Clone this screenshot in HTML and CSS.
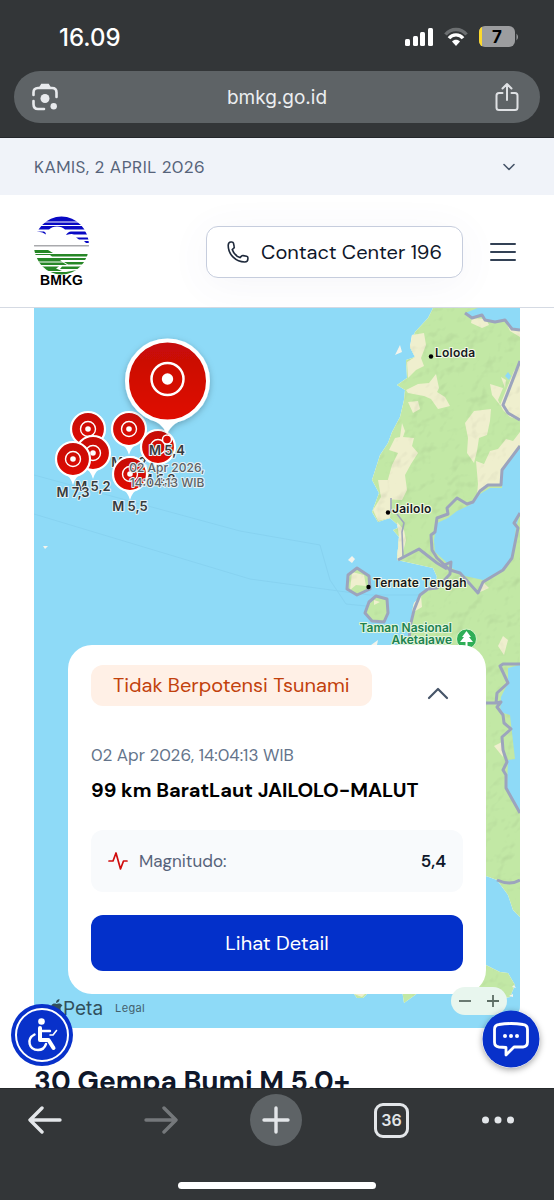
FILE: index.html
```html
<!DOCTYPE html>
<html lang="id">
<head>
	<meta charset="UTF-8">
	<meta name="viewport" content="width=device-width, initial-scale=1">
	<title>BMKG</title>
	<link rel="stylesheet" href="styles.css">
</head>
<body>
	<div class="browser-top">
		<div class="status">
			<span class="clock">16.09</span>
			<div class="status-icons">
				<svg width="28" height="20" viewBox="0 0 28 20" fill="#fff"><rect x="0" y="12" width="5" height="7" rx="1.5"/><rect x="8" y="9" width="5" height="10" rx="1.5"/><rect x="15" y="5" width="5" height="14" rx="1.5"/><rect x="23" y="1" width="5" height="18" rx="1.5"/></svg>
				<svg width="24" height="20" viewBox="0 0 24 20" fill="none" stroke-width="3.4"><path d="M1.5 7.5C7 .9 17 .9 22.5 7.5" stroke="#6c6f71"/><path d="M5 11.2C8.5 6.8 15.5 6.8 19 11.2" stroke="#fff"/><path d="M8 14.6C10 12 14 12 16 14.6L12 19z" fill="#fff"/></svg>
				<svg class="battery" width="40" height="22" viewBox="0 0 40 22"><defs><clipPath id="cell"><rect width="36" height="21" rx="6"/></clipPath></defs><g clip-path="url(#cell)"><rect width="36" height="21" fill="#9c9d9f"/><rect width="3" height="21" fill="#fcd92c"/></g><path d="M37.5 7.5q3 3.500 0 7z" fill="#9c9d9f"/><text x="18" y="17" text-anchor="middle">7</text></svg>
			</div>
		</div>
		<div class="address">
			<button class="plain" aria-label="Lens"><svg width="28" height="28" viewBox="0 0 28 28" fill="none" stroke="#e8eaed" stroke-width="2.6" stroke-linecap="round"><path d="M2.500 12V9.500q0-4.500 4.500-4.500h14q4.500 0 4.500 4.500V14M2.500 18v3q0 5 4.500 5h6"/><path d="M9.500 4.500l1.500-2.500h6l1.500 2.500z" fill="#e8eaed"/><circle cx="14" cy="15.500" r="4.500" fill="#e8eaed" stroke="none"/><circle cx="22.700" cy="23.200" r="3.200" fill="#e8eaed" stroke="none"/></svg></button>
			<span class="url">bmkg.go.id</span>
			<button class="plain" aria-label="Bagikan"><svg width="24" height="30" viewBox="0 0 24 30" fill="none" stroke="#dfe1e4" stroke-width="2" stroke-linecap="round" stroke-linejoin="round"><path d="M7.500 11H4q-2.500 0-2.500 2.500v12Q1.500 28 4 28h16q2.500 0 2.500-2.500v-12Q22.500 11 20 11h-3.500M12 18V2M7.500 6.500L12 2l4.500 4.500"/></svg></button>
		</div>
	</div>

	<div class="page">
		<div class="datebar">
			<span>KAMIS, 2 APRIL 2026</span>
			<svg width="14" height="8" viewBox="0 0 14 8" fill="none" stroke="#475569" stroke-width="1.6" stroke-linecap="round" stroke-linejoin="round"><path d="M2 1.500l5 5 5-5"/></svg>
		</div>
		<header class="header">
			<a href="#" class="logo" aria-label="BMKG">
				<svg width="56" height="72" viewBox="0 0 56 72">
					<defs><clipPath id="globe"><ellipse cx="27.500" cy="29.500" rx="27.500" ry="29"/></clipPath></defs>
					<g clip-path="url(#globe)">
						<path d="M0 0h56v5.500H0zM0 6.500h56v2.500H0zM0 10h56v3.500H31q-3-3-8-3t-8 3H0zM0 17q6-3 12 1.500 0-2-2-3H0zM32 19q2-3.500 5-3.500h19v3H40q-2-1-8 .5zM42 21.500h14v2H45zM50 25h6v2h-4z" fill="#0808c4"/>
						<path d="M0 29h56v1.500H0z" fill="#a9aaad"/>
						<path d="M0 34h14l5 3H0zM0 38h56v2.500H18l-2-1.500H0zM0 42h56v2H26l2 1.500H0zM0 46.500h29l4 2.500H0zM30 46h26v2.500H34zM0 50.500h25l-3 2 6 2.500H0zM28 50.500h28v2.500H26zM0 56h32l8-1.500h16v6H0z" fill="#278727"/>
					</g>
					<text x="27.500" y="69" text-anchor="middle">BMKG</text>
				</svg>
			</a>
			<div class="header-right">
				<a href="#" class="contact">
					<svg width="22" height="22" viewBox="0 0 22 22" fill="none" stroke="#1e293b" stroke-width="1.6" stroke-linejoin="round"><path d="M1.200 4.500C1.200 2.500 2.200 1 3.800 1h1c.9 0 1.500.5 1.700 1.300l.7 3.400c.2.700 0 1.200-.6 1.600L5.200 8.500c1.200 3.600 4 6.700 7.800 8.100l1.500-1.500c.5-.5 1.100-.6 1.700-.5l3.400.6c.8.200 1.300.8 1.300 1.600v.9c0 1.800-1.400 3.300-3.200 3.300C9 21 1.200 13.500 1.200 4.500z"/></svg>
					<span>Contact Center 196</span>
				</a>
				<button class="plain" aria-label="Menu"><svg width="26" height="20" viewBox="0 0 26 20" stroke="#334155" stroke-width="2" stroke-linecap="round"><path d="M1 2h24M1 10h24M1 18h24"/></svg></button>
			</div>
		</header>

		<main class="content">
			<section class="map">
				<svg class="map-canvas" viewBox="34 308 486 720" preserveAspectRatio="xMidYMin slice">
					<defs>
						<linearGradient id="red" x1="0" y1="0" x2="0" y2="1"><stop offset="0" stop-color="#c50d08"/><stop offset="1" stop-color="#e00a00"/></linearGradient>
						<filter id="relief" x="0" y="0" width="100%" height="100%" color-interpolation-filters="sRGB">
							<feTurbulence type="fractalNoise" baseFrequency=".05" numOctaves="3" seed="8" result="noise"/>
							<feDiffuseLighting in="noise" surfaceScale=".7" diffuseConstant="1.14" lighting-color="#fff" result="light"><feDistantLight azimuth="225" elevation="62"/></feDiffuseLighting>
							<feComposite in="light" in2="SourceGraphic" operator="in" result="shade"/>
							<feBlend in="shade" in2="SourceGraphic" mode="multiply"/>
						</filter>
						<filter id="shadow" x="-30%" y="-30%" width="160%" height="160%"><feDropShadow dx="0" dy="2" stdDeviation="3" flood-opacity=".25"/></filter>
						<g id="pin">
							<path d="M-8 15Q-2 18 0 26Q2 18 8 15z" fill="#fff"/>
							<circle r="17" fill="url(#red)" stroke="#fff" stroke-width="2.2"/>
							<circle r="7.500" fill="none" stroke="#fff" stroke-width="1.4"/>
							<circle r="2.800" fill="#fff"/>
						</g>
					</defs>
					<rect x="34" y="308" width="486" height="720" fill="#8edaf7"/>
					<!-- ferry routes -->
					<g fill="none" stroke="#87d2f0"><path d="M34 475L240 531 320 545 330 580 346 604 366 606M34 514L250 579 346 592 370 595H420M503 707H520"/></g>
					<!-- land -->
					<g filter="url(#relief)">
						<path fill="#c2e8a5" d="M433 308L428 318 415 332 410 347 415 357 406 360 407 378 397 385 405 390 404 400 400 417 392 432 388 443 380 455 372 480 379 493 372 512 378 522 390 518 400 527 393 530 399 537 397 560 433 568 437 577 433 588 420 595 413 607 410 627 409 700 420 860 486 876 497 880 508 895 513 910 520 917V308z"/>
						<path fill="#c2e8a5" d="M357 568L369 576 370 589 357 595 347 589 348 575zM376 596L387 599 388 613 384 622 372 621 365 613 369 602zM470 960L486 965 500 972 508 973 515 985 510 997 495 1000 470 998zM354 994H367L363 998H357zM402 990H422L404 1003z"/>
						<path fill="#efefce" d="M412 335L424 333 426 345 421 358 424 366 416 370 408 378 407 362 415 357 410 347zM406 390L418 384 429 383 436 374 439 388 437 392 445 397 450 406 438 409 431 399 424 396 408 393zM408 402L418 401 420 409 413 413zM402 423L405 431 403 437 414 438 412 446 418 453 411 464 405 475 407 490 402 500 384 499 380 493 387 483 392 465 398 453 389 450 395 438 400 437zM474 411L491 409 490 421 487 435 479 438 477 451 474 463 467 453 468 438 465 423zM490 384L503 388 498 400 503 410 510 417 520 420V364L514 371 500 405 492 395zM501 377L506 380 505 388zM472 318L486 319 489 325 482 328 471 323zM505 320L520 331V337L510 331zM520 432L513 441 506 439 498 449 490 451 484 464 476 461 478 484 477 495 488 485H501L502 470 520 445zM378 480H405L404 490 400 500 392 497 390 518 378 521 373 510 381 497zM397 522L404 530 406 540 402 556 397 560 399 537zM352 572L364 575 366 586 356 585 350 590zM414 603L421 596 422 607 412 613zM483 582L489 588 478 593zM503 636L508 640 504 655 498 646zM374 600L380 602 374 605zM494 746L502 742 503 757zM354 994H365L362 997z"/>
					</g>
					<path fill="#f4f4ec" d="M400 345L402 352 395 355zM352 556L355 559 352 563 348 560zM378 640L377 645H371zM514 985l2 3-4-1zM513 994l-4 2 4 1zM43 546l5 0-3 3z"/>
					<!-- bays -->
					<g fill="#8edaf7">
						<path d="M478 308H520V330L512 329 505 320 495 322 485 320 482 315 472 318 465 313z"/>
						<path d="M520 448L502 470 502 488 490 488 480 494 470 505 457 511 448 518 437 523 434 540 435 552 444 560 452 568 465 576 483 580 503 570 512 558 516 528 520 513z"/>
						<path d="M520 665L508 668 508 683 501 697 500 712 510 715 515 759 508 760 507 788 520 813z"/>
						<path d="M508 372l3 4-2 4-4-4z"/>
					</g>
					<g fill="none" stroke="#9ca4bd" stroke-width="3" stroke-linejoin="round">
						<path d="M465 313L472 318 482 315 485 320 495 322 505 320 512 329 520 330M520 361L503 405 508 413 520 420M520 446L502 470 501 485 488 485 480 491 473 502 467 504 457 498 447 508 448 514 437 518 435 532 431 535 432 550 437 558 450 570 460 573 478 593 483 582 503 570 512 558 518 528 514 523 520 513"/>
						<path d="M398 560L419 549 437 563 447 569M437 563L442 566 451 562 450 574 437 588 428 589 420 595 414 610 410 627 409 643"/>
						<path d="M357 568L369 576 370 589 357 595 347 589 348 575zM376 596L387 599 388 613 384 622 372 621 365 613 369 602z"/>
						<path d="M520 664H503L500 666 508 683 497 693 496 703 501 702 497 707 503 715 504 723 511 729 502 737 503 750 507 762 503 770 506 775V788L520 813M486 703H496M497 880Q510 886 520 880"/>
						<path d="M391 498V512M397 514L404 523 402 532 403 556" stroke-width="1.5"/>
					</g>
					<g class="place">
						<circle cx="431" cy="356.500" r="2.200"/><text x="435" y="357">Loloda</text>
						<circle cx="388" cy="512.500" r="2.200"/><text x="392" y="513">Jailolo</text>
						<circle cx="368.500" cy="587" r="2.200"/><text x="373" y="587">Ternate Tengah</text>
					</g>
					<g class="park"><text x="452" y="632">Taman Nasional</text><text x="452" y="644">Aketajawe</text></g>
					<circle cx="466.500" cy="639" r="10" fill="#2fae57" stroke="#d6f2c8"/>
					<path d="M466.500 631L471 637H469L473 642H467.500V646H465.500V642H460L464 637H462z" fill="#fff"/>

					<g class="quake">
						<use href="#pin" x="88" y="429"/>
						<text x="129" y="467">M 5,2</text><use href="#pin" x="129" y="429"/>
						<use href="#pin" x="158" y="447"/><text x="158" y="484">M 5,8</text>
						<use href="#pin" x="93" y="453"/><text x="93" y="491">M 5,2</text>
						<use href="#pin" x="73" y="459"/><text x="73" y="497">M 7,3</text>
						<use href="#pin" x="130" y="474"/><text x="130" y="511">M 5,5</text>
						<g filter="url(#shadow)">
							<path d="M145 417Q162 422 167 434Q172 422 190 417z" fill="#fff"/>
							<circle cx="167.500" cy="381" r="40.500" fill="url(#red)" stroke="#fff" stroke-width="4"/>
						</g>
						<circle cx="167.500" cy="379" r="16" fill="none" stroke="#fff" stroke-width="2.5"/>
						<circle cx="167.500" cy="379" r="5.700" fill="#fff"/>
						<circle cx="167" cy="439.500" r="4.500" fill="#d70b04" stroke="#fff" stroke-width="1.5"/>
						<text x="167" y="455">M 5,4</text>
						<g class="quake-time"><text x="167" y="472">02 Apr 2026,</text><text x="167" y="487">14:04:13 WIB</text></g>
					</g>
				</svg>

				<article class="card">
					<div class="card-top">
						<span class="badge">Tidak Berpotensi Tsunami</span>
						<button class="plain toggle" aria-label="Tutup"><svg width="22" height="14" viewBox="0 0 22 14" fill="none" stroke="#475569" stroke-width="2.2" stroke-linecap="round" stroke-linejoin="round"><path d="M2 12l9-9 9 9"/></svg></button>
					</div>
					<p class="time">02 Apr 2026, 14:04:13 WIB</p>
					<h3 class="location">99 km BaratLaut JAILOLO-MALUT</h3>
					<div class="magnitude">
						<svg width="20" height="20" viewBox="0 0 20 20" fill="none" stroke="#d00d0d" stroke-width="1.7" stroke-linecap="round" stroke-linejoin="round"><path d="M1 10h4L8 2l4.500 16L15.500 10H19"/></svg>
						<span>Magnitudo:</span>
						<strong>5,4</strong>
					</div>
					<a href="#" class="detail">Lihat Detail</a>
				</article>

				<div class="map-footer">
					<span class="maps-logo"><svg width="13" height="18" viewBox="0 0 13 18" fill="currentColor"><path d="M6.500 5C8 4 11 4 12.500 6.500 9.500 8.500 10 12 13 13.500 11 18 9 18 6.500 17 4 18 2 17 .7 13-.5 8 2 3 6.500 5zM6 4Q6 .5 9.500 0 9.500 3.500 6 4z"/></svg>Peta</span>
					<a href="#" class="legal">Legal</a>
					<div class="zoom">
						<button class="plain" aria-label="Perkecil"><svg width="12" height="12" viewBox="0 0 12 12" stroke="#5c6d64" stroke-width="1.8"><path d="M0 6h12"/></svg></button>
						<button class="plain" aria-label="Perbesar"><svg width="12" height="12" viewBox="0 0 12 12" stroke="#5c6d64" stroke-width="1.8"><path d="M0 6h12M6 0v12"/></svg></button>
					</div>
				</div>
			</section>
			<h2 class="heading">30 Gempa Bumi M 5.0+</h2>
		</main>

		<button class="plain float access" aria-label="Aksesibilitas">
			<svg width="62" height="62" viewBox="0 0 62 62" fill="none" stroke="#fff" stroke-linecap="round" stroke-linejoin="round"><circle cx="31" cy="31" r="31" fill="#0831ca" stroke="none"/><circle cx="31" cy="31" r="26" stroke-width="2"/><circle cx="30.500" cy="17.500" r="3.300" fill="#fff" stroke="none"/><path d="M29 24v12h8.500l5 8" stroke-width="4"/><path d="M30 27h9" stroke-width="2.4"/><path d="M39 31h3l3.500-4.500" stroke-width="1.6"/><path d="M23.500 30.500C15 35 18 46 27 46q6 0 8-6" stroke-width="2.4"/></svg>
		</button>
		<button class="plain float chat" aria-label="Chat">
			<svg width="58" height="58" viewBox="0 0 58 58" fill="none" stroke="#fff" stroke-width="2.8" stroke-linejoin="round"><circle cx="29" cy="29" r="28.500" fill="#0831ca" stroke="none"/><path d="M17 14.500Q29 12.500 41 14.500Q45.500 15 45.500 19.500V32Q45.500 36.500 41 37H32L24 45V37.500L17 37Q12.500 36.500 12.500 32V19.500Q12.500 15 17 14.500z"/><g fill="#fff" stroke="none"><circle cx="23" cy="26" r="2"/><circle cx="29" cy="26" r="2"/><circle cx="35" cy="26" r="2"/></g></svg>
		</button>
	</div>

	<div class="browser-bottom">
		<nav class="toolbar">
			<button class="plain back" aria-label="Kembali"><svg width="34" height="28" viewBox="0 0 34 28" fill="none" stroke="#e3e6e9" stroke-width="3.4" stroke-linecap="round" stroke-linejoin="round"><path d="M14 2L2 14l12 12M3 14h29"/></svg></button>
			<button class="plain" aria-label="Maju"><svg width="34" height="28" viewBox="0 0 34 28" fill="none" stroke="#75787b" stroke-width="3.4" stroke-linecap="round" stroke-linejoin="round"><path d="M20 2l12 12-12 12M31 14H2"/></svg></button>
			<button class="plain newtab" aria-label="Tab baru"><svg width="28" height="28" viewBox="0 0 28 28" stroke="#e3e6e9" stroke-width="3.4" stroke-linecap="round"><path d="M2 14h24M14 2v24"/></svg></button>
			<button class="plain tabs">36</button>
			<button class="plain" aria-label="Lainnya"><svg width="34" height="10" viewBox="0 0 34 10" fill="#e3e6e9"><circle cx="4.500" cy="5" r="3.500"/><circle cx="17" cy="5" r="3.500"/><circle cx="29.500" cy="5" r="3.500"/></svg></button>
		</nav>
		<div class="home"></div>
	</div>
</body>
</html>
```
FILE: styles.css
```css
*{box-sizing:border-box;}
body,h2,h3,p{margin:0;}
body{
	display:flex;
	flex-direction:column;
	height:100vh;
	background-color:#fff;
	font-family:"DM Sans",Inter,sans-serif;
	font-optical-sizing:none;
	color:#0f172a;
}
svg{display:block;flex-shrink:0;}
a{color:inherit;text-decoration:none;}
.plain{
	display:flex;
	align-items:center;
	justify-content:center;
	padding:0;
	border:none;
	background:none;
	font:inherit;
	color:inherit;
	cursor:pointer;
}

/* browser */
.browser-top{
	padding:19px 14px 14px;
	background-color:#333638;
	border-bottom:1px solid #24272b;
	font-family:Inter,sans-serif;
	color:#fff;
}
.status{
	display:flex;
	align-items:center;
	justify-content:space-between;
	height:36px;
	padding:0 21px 0 45px;
}
.clock{font-size:24px;font-weight:500;}
.status-icons{display:flex;align-items:center;gap:11px;}
.battery text{font-size:17px;font-weight:700;}
.address{
	display:flex;
	align-items:center;
	justify-content:space-between;
	height:52px;
	margin-top:16px;
	padding:0 21px 0 17px;
	border-radius:26px;
	background-color:#5e6366;
}
.url{font-size:19px;color:#eceef0;}
.browser-bottom{
	height:112px;
	padding:5px 0 0;
	border-top:1px solid #26292b;
	background-color:#333638;
	font-family:Inter,sans-serif;
}
.toolbar{
	display:flex;
	align-items:center;
	justify-content:space-between;
	padding:0 39px 0 28px;
}
.back{width:44px;justify-content:flex-start;}
.newtab{
	width:52px;
	height:52px;
	border-radius:50%;
	background-color:#5e6366;
}
.tabs{
	width:35px;
	height:35px;
	border:3px solid #e3e6e9;
	border-radius:9px;
	font-size:16px;
	font-weight:600;
	color:#e3e6e9;
}
.home{
	width:198px;
	height:7px;
	margin:36px auto 0;
	border-radius:4px;
	background-color:#fff;
}

/* site */
.page{
	position:relative;
	display:flex;
	flex:1;
	flex-direction:column;
	min-height:0;
}
.datebar{
	display:flex;
	align-items:center;
	justify-content:space-between;
	height:57px;
	flex-shrink:0;
	padding:0 38px 0 34px;
	background-color:#f0f3f9;
	font-size:17px;
	letter-spacing:.03em;
	color:#56637a;
}
.header{
	display:flex;
	align-items:center;
	justify-content:space-between;
	height:113px;
	flex-shrink:0;
	padding:2px 38px 0 34px;
	border-bottom:1px solid #d5dae3;
}
.logo text{font:700 14px "Liberation Sans",sans-serif;}
.header-right{display:flex;align-items:center;gap:27px;}
.contact{
	display:flex;
	align-items:center;
	gap:12px;
	height:52px;
	padding:0 20px;
	border:1px solid #c6cddd;
	border-radius:12px;
	box-shadow:0 6px 40px rgba(80,90,160,.06);
	font-size:20px;
}
.content{
	flex:1;
	min-height:0;
	padding:0 34px;
	overflow-y:auto;
	scrollbar-width:none;
}
.map{
	position:relative;
	display:flex;
	flex-direction:column;
	justify-content:flex-end;
	min-height:720px;
	border-radius:0 0 24px 24px;
	overflow:hidden;
	background-color:#8edaf7;
}
.map-canvas{position:absolute;top:0;left:0;width:100%;height:100%;}
.map-canvas text{
	font-family:Inter,sans-serif;
	paint-order:stroke;
	stroke-linejoin:round;
}
.place text{font-size:12px;font-weight:600;fill:#161a1c;stroke:#f4f9e8;stroke-width:2px;letter-spacing:.02em;}
.park text{font-size:12px;font-weight:600;text-anchor:end;fill:#208350;stroke:#e4f6df;stroke-width:2px;}
.quake text{font-size:13px;font-weight:600;text-anchor:middle;fill:#363a3d;stroke:#e3f1f6;stroke-width:2px;}
.quake .quake-time text{font-size:12px;font-weight:500;fill:#5c6266;}

.card{
	position:relative;
	margin:0 34px;
	padding:20px 23px 23px;
	border-radius:24px;
	background-color:#fff;
}
.card-top{display:flex;align-items:flex-start;justify-content:space-between;}
.badge{
	padding:0 22px;
	border-radius:12px;
	background-color:#fff0e6;
	font-size:20px;
	line-height:41px;
	color:#c2410c;
}
.toggle{height:56px;margin-right:14px;}
.time{margin-top:21px;font-size:17px;line-height:26px;color:#64748b;}
.location{margin-top:8px;font-size:20px;line-height:28px;font-weight:700;color:#000;}
.magnitude{
	display:flex;
	align-items:center;
	gap:11px;
	height:62px;
	margin-top:26px;
	padding:0 17px;
	border-radius:12px;
	background-color:#f8fafc;
	font-size:17px;
	color:#56637a;
}
.magnitude strong{margin-left:auto;font-weight:600;color:#0f172a;}
.detail{
	display:block;
	margin-top:23px;
	border-radius:12px;
	background-color:#0330ca;
	font-size:20px;
	line-height:56px;
	text-align:center;
	color:#fff;
}
.map-footer{
	position:relative;
	display:flex;
	align-items:center;
	height:34px;
	padding:0 13px 6px 16px;
	font-family:Inter,sans-serif;
}
.maps-logo{display:flex;align-items:center;font-size:19px;color:#31505c;}
.legal{margin-left:12px;font-size:11px;letter-spacing:.03em;color:#43606c;}
.zoom{
	display:flex;
	align-items:center;
	justify-content:space-between;
	width:56px;
	height:28px;
	margin:-14px 0 0 auto;
	padding:0 8px;
	border-radius:14px;
	background-color:#e8f6ee;
}
.heading{margin-top:36px;font-size:28px;line-height:36px;font-weight:700;white-space:nowrap;}
.float{position:absolute;border-radius:50%;}
.access{left:11px;bottom:22px;}
.chat{right:14px;bottom:20px;box-shadow:0 2px 6px rgba(0,0,0,.35);}
```
